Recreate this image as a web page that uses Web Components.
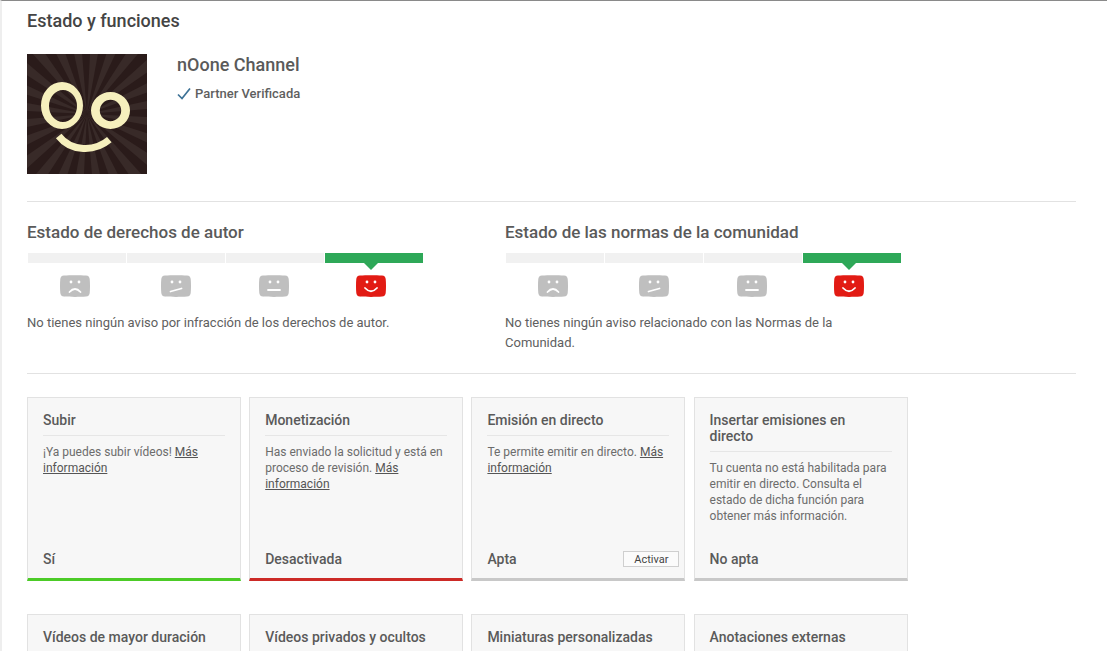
<!DOCTYPE html>
<html lang="es">
<head>
<meta charset="utf-8">
<title>Estado y funciones</title>
<style>
html, body { margin: 0; height: 651px; overflow: hidden; background: #fff; }
body { font-family: Roboto, "Liberation Sans", sans-serif; }
a { color: #555; text-decoration: underline; }
</style>
</head>
<body>
<status-page>
  <channel-header name="nOone Channel" badge="Partner Verificada"></channel-header>
  <status-meter slot="meters" heading="Estado de derechos de autor">No tienes ningún aviso por infracción de los derechos de autor.</status-meter>
  <status-meter slot="meters" heading="Estado de las normas de la comunidad">No tienes ningún aviso relacionado con las Normas de la Comunidad.</status-meter>

  <feature-card slot="cards" heading="Subir" state="Sí" tone="ok">¡Ya puedes subir vídeos! <a href="#">Más información</a></feature-card>
  <feature-card slot="cards" heading="Monetización" state="Desactivada" tone="off">Has enviado la solicitud y está en proceso de revisión. <a href="#">Más información</a></feature-card>
  <feature-card slot="cards" heading="Emisión en directo" state="Apta" action="Activar">Te permite emitir en directo. <a href="#">Más información</a></feature-card>
  <feature-card slot="cards" heading="Insertar emisiones en directo" state="No apta">Tu cuenta no está habilitada para emitir en directo. Consulta el estado de dicha función para obtener más información.</feature-card>
  <feature-card slot="cards" heading="Vídeos de mayor duración"></feature-card>
  <feature-card slot="cards" heading="Vídeos privados y ocultos"></feature-card>
  <feature-card slot="cards" heading="Miniaturas personalizadas"></feature-card>
  <feature-card slot="cards" heading="Anotaciones externas"></feature-card>
</status-page>

<script>
class StatusPage extends HTMLElement{
    connectedCallback(){
        this.attachShadow({mode: 'open'}).innerHTML = `
            <style>
                :host{
                    display: block;
                    border-top: 1px solid #8a8a8a;
                    border-left: 2px solid #eeeeee;
                    padding: 0 31px 0 25px;
                    color: #444;
                }
                h1{
                    margin: 0;
                    padding-top: 11px;
                    font-size: 18px;
                    line-height: 18px;
                    font-weight: 500;
                    color: #444;
                }
                .top{
                    padding: 24px 0 27px;
                    border-bottom: 1px solid #e2e2e2;
                }
                .meters{
                    display: grid;
                    grid-template-columns: 478px 1fr;
                    height: 171px;
                    border-bottom: 1px solid #e2e2e2;
                }
                .cards{
                    display: grid;
                    grid-template-columns: repeat(4, 214px);
                    gap: 33px 8.2px;
                    padding-top: 23px;
                }
            </style>
            <h1>Estado y funciones</h1>
            <div class="top"><slot></slot></div>
            <div class="meters"><slot name="meters"></slot></div>
            <div class="cards"><slot name="cards"></slot></div>`;
    }
}

class ChannelHeader extends HTMLElement{
    connectedCallback(){
        let rays = '';
        for(let i = 0; i < 24; i++){
            let a = i * Math.PI * 2 / 24 + 0.05, b = a + 0.13;
            let x1 = (60 + Math.cos(a) * 130).toFixed(1), y1 = (60 + Math.sin(a) * 130).toFixed(1);
            let x2 = (60 + Math.cos(b) * 130).toFixed(1), y2 = (60 + Math.sin(b) * 130).toFixed(1);
            rays += `<polygon points="60,60 ${x1},${y1} ${x2},${y2}"/>`;
        }
        this.attachShadow({mode: 'open'}).innerHTML = `
            <style>
                :host{
                    display: flex;
                    gap: 30px;
                }
                svg.logo{
                    display: block;
                    width: 120px;
                    height: 120px;
                    flex: none;
                }
                h2{
                    margin: 0;
                    padding-top: 1px;
                    font-size: 18px;
                    line-height: 20px;
                    font-weight: 500;
                    color: #5a5a5a;
                }
                .badge{
                    display: flex;
                    align-items: center;
                    gap: 4px;
                    margin-top: 10px;
                    font-size: 13px;
                    line-height: 18px;
                    font-weight: 500;
                    color: #5f5f5f;
                }
            </style>
            <svg class="logo" viewBox="0 0 120 120">
                <rect width="120" height="120" fill="#2a1b1a"/>
                <g fill="#382a28">${rays}</g>
                <path fill="#f6f0bd" fill-rule="evenodd" d="M14 51.500a21 23.500 0 1 0 42 0a21 23.500 0 1 0 -42 0zM22 52a14 16 0 1 1 28 0a14 16 0 1 1 -28 0z"/>
                <path fill="#f6f0bd" fill-rule="evenodd" d="M64 56.500a19.500 18.500 0 1 0 39 0a19.500 18.500 0 1 0 -39 0zM72.800 56.500a10.700 10.700 0 1 1 21.400 0a10.700 10.700 0 1 1 -21.400 0z"/>
                <path fill="none" stroke="#f6f0bd" stroke-width="7" d="M31.700 82C44 98 68 98 82.300 85.700"/>
            </svg>
            <div>
                <h2>${this.getAttribute('name')}</h2>
                <div class="badge">
                    <svg width="14" height="12" viewBox="0 0 14 12"><path d="M1 6.500l4 4l8 -10" fill="none" stroke="#3d7296" stroke-width="1.700"/></svg>
                    <span>${this.getAttribute('badge')}</span>
                </div>
            </div>`;
    }
}

class MoodIcon extends HTMLElement{
    connectedCallback(){
        let mouths = {
            sad: 'M9.500 17q5.500 -6 11 0',
            unsure: 'M9.500 16.500l11 -3',
            flat: 'M9 15h12',
            happy: 'M9 13q6 6.500 12 0'
        };
        let mood = this.getAttribute('mood');
        this.attachShadow({mode: 'open'}).innerHTML = `
            <style>
                :host{ display: block; width: 30px; height: 22px; }
                svg{ display: block; }
            </style>
            <svg width="30" height="22" viewBox="0 0 30 22">
                <path fill="${mood == 'happy' ? '#e21b14' : '#bfbfbf'}" d="M4 .5C10 0 20 0 26 .5C28.500 .7 29.500 2 29.700 4C30.100 8 30.100 14 29.700 18C29.500 20 28.500 21.300 26 21.500C20 22 10 22 4 21.500C1.500 21.300 .5 20 .3 18C-.1 14 -.1 8 .3 4C.5 2 1.500 .7 4 .5z"/>
                <circle cx="11" cy="7" r="1.400" fill="#fff"/>
                <circle cx="19" cy="7" r="1.400" fill="#fff"/>
                <path d="${mouths[mood]}" fill="none" stroke="#fff" stroke-width="1.800" stroke-linecap="round"/>
            </svg>`;
    }
}

class StatusMeter extends HTMLElement{
    connectedCallback(){
        this.attachShadow({mode: 'open'}).innerHTML = `
            <style>
                :host{
                    display: block;
                    padding-top: 20px;
                }
                h3{
                    margin: 0;
                    font-size: 17px;
                    line-height: 20px;
                    font-weight: 500;
                    color: #5a5a5a;
                }
                .bar{
                    display: grid;
                    grid-template-columns: repeat(4, 98px);
                    gap: 1px;
                    margin: 11px 0 0 1px;
                }
                .bar div{
                    height: 10px;
                    background: #f1f1f1;
                    position: relative;
                }
                .bar div.now{
                    background: #2ea858;
                }
                .bar div.now::after{
                    content: "";
                    position: absolute;
                    left: 39px;
                    top: 10px;
                    border: 7px solid transparent;
                    border-top-color: #2ea858;
                    border-bottom: 0;
                }
                .moods{
                    display: flex;
                    margin: 12px 0 0 33px;
                }
                mood-icon:nth-child(2){ margin-left: 71px; }
                mood-icon:nth-child(3){ margin-left: 68px; }
                mood-icon:nth-child(4){ margin-left: 67px; }
                p{
                    width: 396px;
                    margin: 16px 0 0;
                    font-size: 13px;
                    line-height: 20px;
                    color: #606060;
                }
            </style>
            <h3>${this.getAttribute('heading')}</h3>
            <div class="bar"><div></div><div></div><div></div><div class="now"></div></div>
            <div class="moods">
                <mood-icon mood="sad"></mood-icon>
                <mood-icon mood="unsure"></mood-icon>
                <mood-icon mood="flat"></mood-icon>
                <mood-icon mood="happy"></mood-icon>
            </div>
            <p><slot></slot></p>`;
    }
}

class FeatureCard extends HTMLElement{
    connectedCallback(){
        let tones = {ok: '#4ccb27', off: '#cc2a26'};
        let state = this.getAttribute('state') || '';
        let action = this.getAttribute('action');
        this.attachShadow({mode: 'open'}).innerHTML = `
            <style>
                :host{
                    display: flex;
                    flex-direction: column;
                    box-sizing: border-box;
                    height: 184px;
                    padding: 14px 5px 9px 15px;
                    background: #f7f7f7;
                    border: 1px solid #e2e2e2;
                    border-bottom: 3px solid ${tones[this.getAttribute('tone')] || '#c8c8c8'};
                    color: #5a5a5a;
                }
                h4{
                    margin: 0 10px 0 0;
                    padding-bottom: 7px;
                    border-bottom: 1px solid #e6e6e6;
                    font-size: 14px;
                    line-height: 16px;
                    font-weight: 500;
                    color: #5a5a5a;
                }
                .text{
                    flex: 1;
                    margin: 8px 10px 0 0;
                    font-size: 12px;
                    line-height: 16px;
                    color: #6c6c6c;
                }
                .foot{
                    display: flex;
                    justify-content: space-between;
                    align-items: center;
                    height: 20px;
                    font-size: 14px;
                    font-weight: 500;
                }
                button{
                    box-sizing: border-box;
                    width: 56px;
                    height: 16px;
                    padding: 0;
                    background: #fbfbfb;
                    border: 1px solid #cfcfcf;
                    border-radius: 0;
                    font: 400 11px Roboto, "Liberation Sans", sans-serif;
                    color: #444;
                }
            </style>
            <h4>${this.getAttribute('heading')}</h4>
            <div class="text"><slot></slot></div>
            <div class="foot">
                <span>${state}</span>
                ${action ? `<button>${action}</button>` : ''}
            </div>`;
    }
}

customElements.define('status-page', StatusPage);
customElements.define('channel-header', ChannelHeader);
customElements.define('mood-icon', MoodIcon);
customElements.define('status-meter', StatusMeter);
customElements.define('feature-card', FeatureCard);
</script>
</body>
</html>
